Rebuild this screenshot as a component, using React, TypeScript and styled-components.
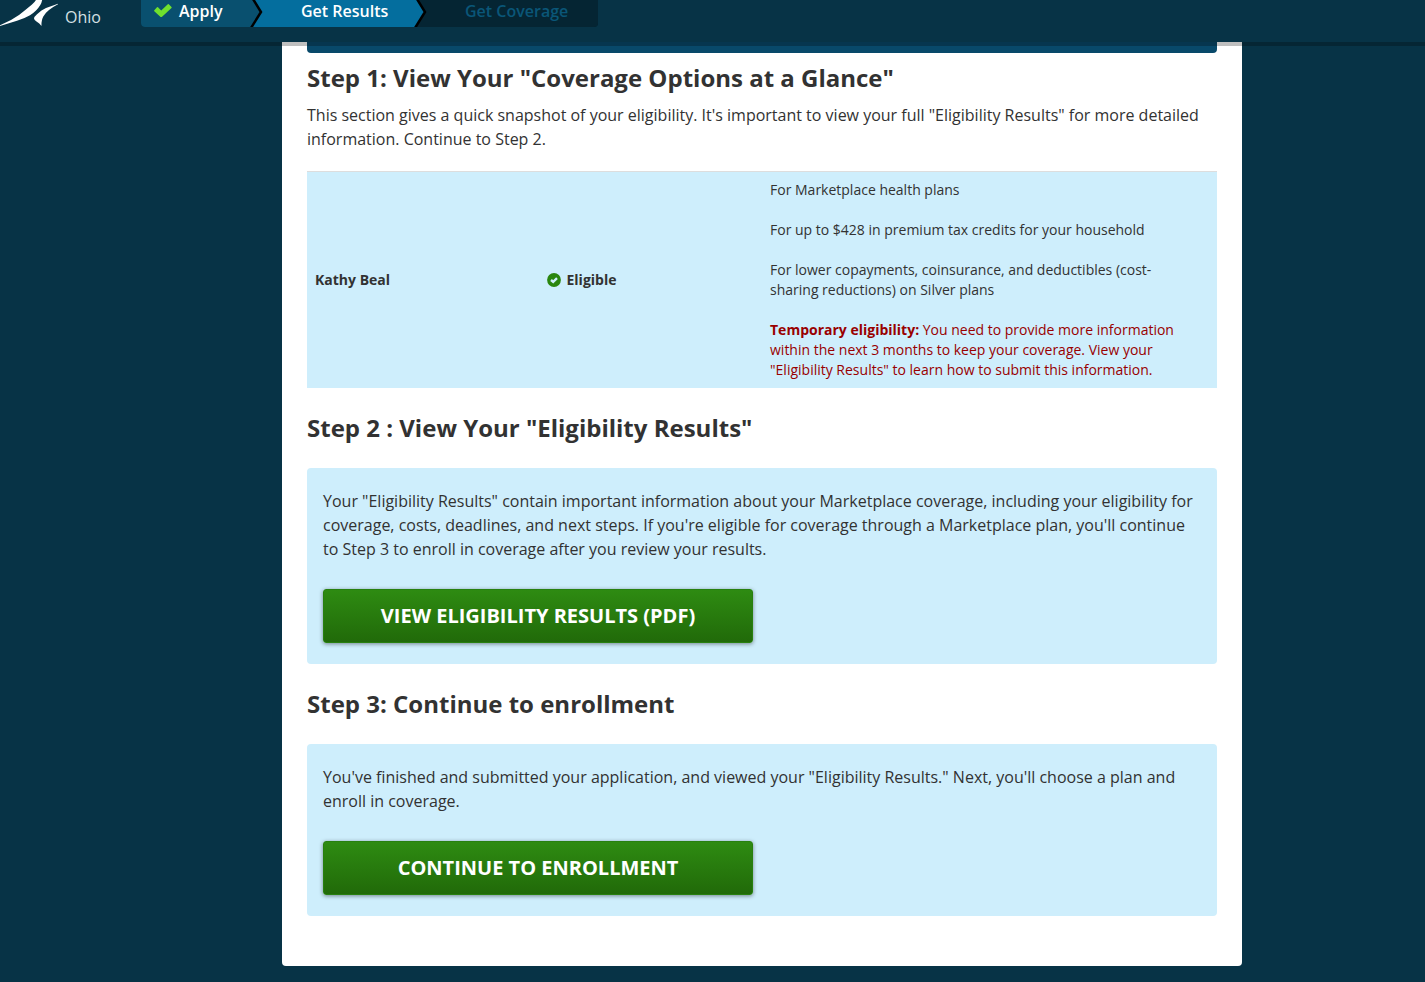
import React from "react";
import styled, { createGlobalStyle } from "styled-components";

const GlobalStyle = createGlobalStyle`
  * { box-sizing: border-box; }
  body {
    margin: 0;
    background: #073346;
    color: #323232;
    font-family: "Open Sans", "Liberation Sans", sans-serif;
    font-size: 16px;
    line-height: 24px;
  }
`;

const Header = styled.header`
  position: sticky;
  top: 0;
  z-index: 1;
  display: flex;
  align-items: flex-start;
  height: 42px;
  background: #073346;
  box-shadow: 0 4px 0 rgba(0, 0, 0, 0.25);
`;

const Brand = styled.a`
  display: flex;
  align-items: flex-start;
  gap: 7px;
  width: 141px;
  color: #d5e0e4;
  text-decoration: none;
`;

const StateName = styled.span`
  padding-top: 5px;
`;

const Steps = styled.ol`
  display: flex;
  width: 457px;
  height: 27px;
  margin: 0;
  padding: 0;
  list-style: none;
  overflow: hidden;
  border-radius: 0 0 4px 4px;
  background: #052533;
`;

const tones = {
  done: { fill: "#09506f", text: "#ffffff", indent: 13 },
  current: { fill: "#046e9e", text: "#ffffff", indent: 38 },
  next: { fill: "#052533", text: "#0a5678", indent: 38 },
};

const Step = styled.li<{ $tone: keyof typeof tones; $width: number }>`
  display: flex;
  flex: 0 0 ${(p) => p.$width}px;
  justify-content: space-between;
  padding-left: ${(p) => tones[p.$tone].indent}px;
  background: ${(p) => tones[p.$tone].fill};
  color: ${(p) => tones[p.$tone].text};
`;

const StepLink = styled.a`
  display: flex;
  flex: 1;
  gap: 7px;
  color: inherit;
  font-weight: 600;
  line-height: 22px;
  text-decoration: none;
  white-space: nowrap;
`;

const Main = styled.main`
  padding: 0 0 16px 99px;
`;

const Card = styled.div`
  max-width: 960px;
  margin: 0 auto;
  padding: 0 25px 50px;
  background: #fff;
  border-radius: 0 0 4px 4px;
`;

const Banner = styled.div`
  height: 11px;
  margin-bottom: 5px;
  background: #08496a;
  border-radius: 0 0 4px 4px;
`;

const Title = styled.h2<{ $tight?: boolean }>`
  margin: ${(p) => (p.$tight ? "0 0 5px" : "20px 0")};
  font-size: 24px;
  line-height: 40px;
  font-weight: 700;
`;

const Text = styled.p`
  margin: 0 0 20px;
`;

const Results = styled.table`
  width: 100%;
  table-layout: fixed;
  border-collapse: separate;
  border-spacing: 0;
  background: #ceeefc;
  font-size: 14px;
  line-height: 20px;

  th,
  td {
    padding: 8px;
    border-top: 1px solid #ddd;
    text-align: left;
  }

  td:last-child {
    padding-right: 32px;
  }
`;

const NameCell = styled.th`
  width: 25%;
`;

const StatusCell = styled.td`
  width: 25%;
`;

const Status = styled.span`
  display: flex;
  align-items: center;
  gap: 6px;
  padding-left: 4px;
  font-weight: 700;
`;

const Detail = styled.p<{ $alert?: boolean }>`
  margin: 0 0 20px;
  color: ${(p) => (p.$alert ? "#990000" : "inherit")};

  &:last-child {
    margin-bottom: 0;
  }
`;

const Panel = styled.section`
  padding: 21px 16px;
  background: #ceeefc;
  border-radius: 4px;
`;

const PanelText = styled.p`
  margin: 0 0 28px;
`;

const Button = styled.button`
  display: block;
  width: 100%;
  max-width: 430px;
  height: 54px;
  border: 1px solid #28800f;
  border-radius: 3px;
  background: linear-gradient(#2e8b12, #216a09);
  box-shadow: 0 1px 4px rgba(0, 0, 0, 0.45);
  color: #fff;
  font: 700 20px/24px "Open Sans", "Liberation Sans", sans-serif;
  text-transform: uppercase;
  cursor: pointer;
`;

const Logo = () => (
  <svg width="58" height="27" viewBox="0 0 58 27" fill="#fff" aria-hidden="true">
    <path d="M0 25.300L11 20L19 15L25 10.300L32 4.500Q35 2 36.500 -1H42.300Q42 2 40.300 5Q38.500 8 36 10.500Q33.500 13 30 15.300Q25 18.300 17 20.700L0 26Z" />
    <path d="M58 3.800L46 8L41.500 10.500L37 14.200Q34 16.800 34 18.500Q34.200 20.200 36.500 21.500Q39.500 23 41.500 26Q41.300 22.500 42 20Q42.400 18 43.300 16.500L46 12.800L49 10Q52 7.500 58 4.300Z" />
  </svg>
);

const Tick = () => (
  <svg width="18" height="22" viewBox="0 0 18 22" fill="#6fe02e" aria-hidden="true">
    <path d="M0.300 10.300L3 7.300Q3.500 6.900 4 7.300L7.200 10.400L13.800 4.200Q14.300 3.800 14.800 4.200L17.500 6.900Q17.900 7.400 17.500 7.900L7.800 16.900Q7.200 17.300 6.600 16.900L0.300 11.200Q-0.100 10.700 0.300 10.300Z" />
  </svg>
);

const Chevron = ({ from, to }: { from: string; to: string }) => (
  <svg width="13" height="27" viewBox="0 0 13 27" aria-hidden="true">
    <path d="M0 0H13V27H0Z" fill={to} />
    <path d="M0 0H3L11 12L1 27H0Z" fill={from} />
    <path d="M3 -1L11 12L1 28" fill="none" stroke="#000" strokeWidth="2.500" />
  </svg>
);

const CheckBadge = () => (
  <svg width="14" height="14" viewBox="0 0 14 14" aria-hidden="true">
    <circle cx="7" cy="7" r="6.900" fill="#2a860e" />
    <path d="M4 7L6.200 8.800L10 5.200" fill="none" stroke="#ceeefc" strokeWidth="2.400" />
  </svg>
);

export default function App() {
  return (
    <>
      <GlobalStyle />
      <Header>
        <Brand href="#home">
          <Logo />
          <StateName>Ohio</StateName>
        </Brand>
        <Steps>
          <Step $tone="done" $width={122}>
            <StepLink href="#apply">
              <Tick />
              Apply
            </StepLink>
            <Chevron from={tones.done.fill} to={tones.current.fill} />
          </Step>
          <Step $tone="current" $width={164}>
            <StepLink href="#results">Get Results</StepLink>
            <Chevron from={tones.current.fill} to={tones.next.fill} />
          </Step>
          <Step $tone="next" $width={171}>
            <StepLink href="#coverage">Get Coverage</StepLink>
          </Step>
        </Steps>
      </Header>
      <Main>
        <Card>
          <Banner />
          <Title $tight>Step 1: View Your "Coverage Options at a Glance"</Title>
          <Text>
            This section gives a quick snapshot of your eligibility. It's important to view your full "Eligibility
            Results" for more detailed information. Continue to Step 2.
          </Text>
          <Results>
            <tbody>
              <tr>
                <NameCell scope="row">Kathy Beal</NameCell>
                <StatusCell>
                  <Status>
                    <CheckBadge />
                    Eligible
                  </Status>
                </StatusCell>
                <td>
                  <Detail>For Marketplace health plans</Detail>
                  <Detail>For up to $428 in premium tax credits for your household</Detail>
                  <Detail>
                    For lower copayments, coinsurance, and deductibles (cost-sharing reductions) on Silver plans
                  </Detail>
                  <Detail $alert>
                    <strong>Temporary eligibility:</strong> You need to provide more information within the next 3
                    months to keep your coverage. View your "Eligibility Results" to learn how to submit this
                    information.
                  </Detail>
                </td>
              </tr>
            </tbody>
          </Results>
          <Title>Step 2 : View Your "Eligibility Results"</Title>
          <Panel>
            <PanelText>
              Your "Eligibility Results" contain important information about your Marketplace coverage, including your
              eligibility for coverage, costs, deadlines, and next steps. If you're eligible for coverage through a
              Marketplace plan, you'll continue to Step 3 to enroll in coverage after you review your results.
            </PanelText>
            <Button type="button">View Eligibility Results (PDF)</Button>
          </Panel>
          <Title>Step 3: Continue to enrollment</Title>
          <Panel>
            <PanelText>
              You've finished and submitted your application, and viewed your "Eligibility Results." Next, you'll
              choose a plan and enroll in coverage.
            </PanelText>
            <Button type="button">Continue to enrollment</Button>
          </Panel>
        </Card>
      </Main>
    </>
  );
}
